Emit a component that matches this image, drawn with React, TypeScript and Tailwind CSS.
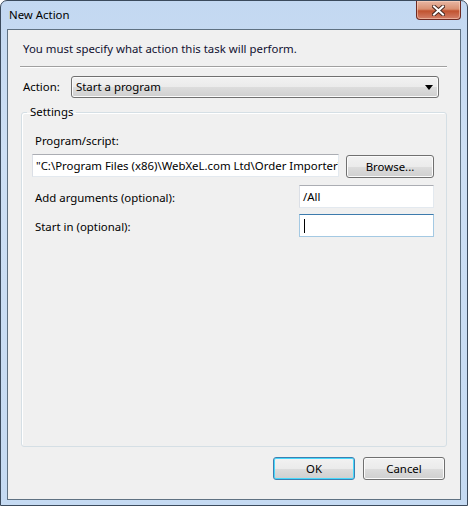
import React from 'react';

const font = { fontFamily: '"Segoe UI", "Noto Sans", "Liberation Sans", sans-serif' };

function Win7Button({ label, isDefault = false, className = '' }: { label: string; isDefault?: boolean; className?: string }) {
  return (
    <div
      className={`flex items-center justify-center rounded-[3px] border text-black ${
        isDefault
          ? 'border-[#3c7fb1] shadow-[inset_0_0_0_1px_#48d8fb]'
          : 'border-[#707070] shadow-[inset_0_0_0_1px_#fbfbfb]'
      } bg-[linear-gradient(to_bottom,#f2f2f2_0%,#ebebeb_50%,#dddddd_50%,#cfcfcf_100%)] ${className}`}
    >
      {label}
    </div>
  );
}

function TextBox({ value, focused = false, className = '' }: { value: string; focused?: boolean; className?: string }) {
  return (
    <div
      className={`flex items-center overflow-hidden whitespace-nowrap bg-white px-[3px] text-black border ${
        focused
          ? 'border-[#a4c9e3] border-t-[#3d7bad]'
          : 'border-[#e3e9ef] border-t-[#abadb3] border-l-[#dbdfe6]'
      } ${className}`}
    >
      {value}
      {focused && <span className="ml-[1px] h-[14px] w-[1px] bg-black" />}
    </div>
  );
}

export default function App() {
  return (
    <div className="h-[506px] w-[468px] bg-white text-[11.4px]" style={font}>
      <div className="flex h-full w-full flex-col rounded-t-[7px] border border-[#3b4a5c] bg-[linear-gradient(to_bottom,#c3d8f1_0%,#cddff4_30%,#c5daf2_100%)] px-[6px] pb-[5px]">
        {/* title bar */}
        <div className="flex h-[28px] items-start justify-between">
          <span className="mt-[6px] ml-[2px] leading-[16px] text-black">New Action</span>
          <div className="flex h-[19px] w-[45px] items-center justify-center rounded-b-[4px] border border-t-0 border-[#6e2a22] bg-[linear-gradient(to_bottom,#e8b7a4_0%,#d99072_45%,#c1522f_55%,#d3806a_100%)] shadow-[inset_0_0_0_1px_rgba(255,220,200,0.5)]">
            <svg width="13" height="11" viewBox="0 0 13 11">
              <path
                d="M2 1.5 L11 9.5 M11 1.5 L2 9.5"
                stroke="#4a2a22"
                strokeWidth="4"
                strokeLinecap="square"
              />
              <path d="M2 1.5 L11 9.5 M11 1.5 L2 9.5" stroke="#ffffff" strokeWidth="2" strokeLinecap="square" />
            </svg>
          </div>
        </div>

        {/* client area */}
        <div className="flex flex-1 flex-col border border-[#5f7182] bg-[#f0f0f0] leading-[16px] text-black">
          <p className="mt-[11px] ml-[15px] text-[#101030]">You must specify what action this task will perform.</p>

          <div className="mt-[9px] ml-[12px] mr-[13px] border-t border-b border-t-[#a0a0a0] border-b-white" />

          <div className="mt-[8px] flex items-center">
            <span className="ml-[15px] w-[48px]">Action:</span>
            <div className="flex h-[22px] w-[368px] items-center justify-between rounded-[3px] border border-[#707070] bg-[linear-gradient(to_bottom,#f2f2f2_0%,#ebebeb_50%,#dddddd_50%,#cfcfcf_100%)] pl-[4px] pr-[5px] shadow-[inset_0_0_0_1px_#fbfbfb]">
              <span>Start a program</span>
              <svg width="8" height="5" viewBox="0 0 8 5">
                <path d="M0 0 H8 L4 5 Z" fill="#000" />
              </svg>
            </div>
          </div>

          <fieldset className="mt-[6px] ml-[13px] h-[343px] w-[426px] rounded-[3px] border border-[#d5dfe5] shadow-[inset_1px_1px_0_#ffffff]">
            <legend className="ml-[5px] px-[3px] leading-[16px]">Settings</legend>
            <div className="flex flex-col pl-[13px] pr-[12px]">
              <span className="mt-[13px]">Program/script:</span>
              <div className="mt-[5px] flex items-start">
                <TextBox value={'"C:\\Program Files (x86)\\WebXeL.com Ltd\\Order Importer\\'} className="h-[23px] w-[307px] -ml-[3px]" />
                <Win7Button label="Browse..." className="ml-[7px] mt-[1px] h-[23px] w-[88px]" />
              </div>
              <div className="mt-[7px] flex items-center justify-between">
                <span className="mt-[3px]">Add arguments (optional):</span>
                <TextBox value="/All" className="h-[23px] w-[135px]" />
              </div>
              <div className="mt-[6px] flex items-center justify-between">
                <span className="mt-[2px]">Start in (optional):</span>
                <TextBox value="" focused className="h-[23px] w-[135px]" />
              </div>
            </div>
          </fieldset>

          <div className="mt-[10px] flex justify-end gap-[8px] pr-[15px]">
            <Win7Button label="OK" isDefault className="h-[23px] w-[82px]" />
            <Win7Button label="Cancel" className="h-[23px] w-[82px]" />
          </div>
        </div>
      </div>
    </div>
  );
}
